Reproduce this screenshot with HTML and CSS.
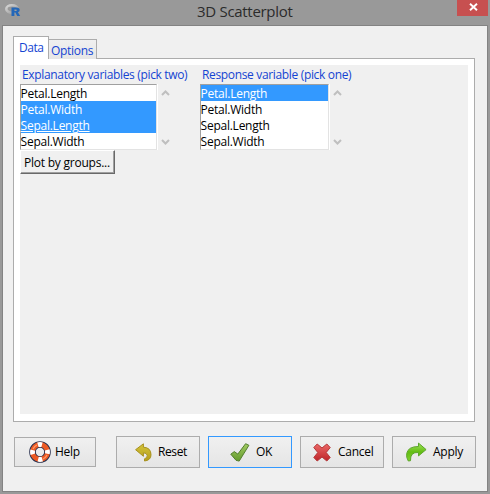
FILE: index.html
```
<!DOCTYPE html>
<html lang="en">
<head>
<meta charset="utf-8">
<title>3D Scatterplot</title>
<link rel="stylesheet" href="styles.css">
</head>
<body>
<div class="window">
  <header class="titlebar">
    <svg class="logo" width="17" height="13" viewBox="0 0 17 13">
      <defs><linearGradient id="ring" x2="1" y2="1"><stop offset="0" stop-color="#d6d6d6"/><stop offset="1" stop-color="#999"/></linearGradient></defs>
      <ellipse cx="7" cy="5" rx="5.700" ry="3.700" fill="none" stroke="url(#ring)" stroke-width="2.600"/>
      <path d="M6.500 3.500h5q3.200 0 3.200 2.500 0 1.700-1.800 2.300l2.300 3.700h-3l-1.800-3.400h-1v3.400h-2.900zM9.400 5.400v1.500h1.500q.9 0 .9-.75t-.9-.75z" fill="#2467b8" fill-rule="evenodd"/>
    </svg>
    <h1 class="title">3D Scatterplot</h1>
    <div class="close"><svg width="9" height="8" viewBox="0 0 9 8"><path d="M1 .7l7 6.600M8 .7L1 7.300" stroke="#fff" stroke-width="1.900"/></svg></div>
  </header>
  <main class="client">
    <nav class="tabs">
      <div class="tab active">Data</div>
      <div class="tab">Options</div>
    </nav>
    <section class="pane">
      <div class="sheet">
        <div class="pickers">
          <div class="picker explanatory">
            <div class="label">Explanatory variables (pick two)</div>
            <div class="row">
              <ul class="list">
                <li>Petal.Length</li>
                <li class="selected">Petal.Width</li>
                <li class="selected current">Sepal.Length</li>
                <li>Sepal.Width</li>
              </ul>
              <div class="scroll">
                <svg width="9" height="6" viewBox="0 0 9 6"><path d="M1 5l3.500-3.500L8 5"/></svg>
                <svg width="9" height="6" viewBox="0 0 9 6"><path d="M1 1l3.500 3.500L8 1"/></svg>
              </div>
            </div>
          </div>
          <div class="picker response">
            <div class="label">Response variable (pick one)</div>
            <div class="row">
              <ul class="list">
                <li class="selected">Petal.Length</li>
                <li>Petal.Width</li>
                <li>Sepal.Length</li>
                <li>Sepal.Width</li>
              </ul>
              <div class="scroll">
                <svg width="9" height="6" viewBox="0 0 9 6"><path d="M1 5l3.500-3.500L8 5"/></svg>
                <svg width="9" height="6" viewBox="0 0 9 6"><path d="M1 1l3.500 3.500L8 1"/></svg>
              </div>
            </div>
          </div>
        </div>
        <button class="groups">Plot by groups...</button>
      </div>
    </section>
    <footer class="actions">
      <button class="action help">
        <svg width="22" height="22" viewBox="0 0 22 22">
          <circle cx="11" cy="11" r="7.500" fill="none" stroke="#28304e" stroke-width="6.600"/>
          <circle cx="11" cy="11" r="7.500" fill="none" stroke="#ec5a24" stroke-width="4.800"/>
          <circle cx="11" cy="11" r="7.500" fill="none" stroke="#fff" stroke-width="4.800" stroke-dasharray="4.200 7.580" stroke-dashoffset="-9.400"/>
          <path d="M4 8q1.500-3 4-4M14 18q3-1.500 4-4" fill="none" stroke="#ff9a68" stroke-width="1.200"/>
        </svg><span>Help</span>
      </button>
      <button class="action reset">
        <svg width="17" height="19" viewBox="0 0 17 19">
          <defs><linearGradient id="gold" x2="0" y2="1"><stop offset="0" stop-color="#d3c43b"/><stop offset="1" stop-color="#b69d19"/></linearGradient></defs>
          <path d="M.6 6.700L8.400.8v3.400q7.600.4 7.600 7.500 0 5.600-6.500 6.300v-2.200q3.200-.8 2.700-3.500-.4-2.400-3.800-2.500v3.500z" fill="url(#gold)" stroke="#a79120"/>
        </svg><span>Reset</span>
      </button>
      <button class="action ok">
        <svg width="20" height="19" viewBox="0 0 20 19">
          <defs><linearGradient id="green" x2="0" y2="1"><stop offset="0" stop-color="#a2cb62"/><stop offset="1" stop-color="#649b2d"/></linearGradient></defs>
          <path d="M.8 11.200l3.500-2.600 3.500 2.500L15.600.7l3.300 1.600L9.200 18.100 6 17.300z" fill="url(#green)" stroke="#537e2e" stroke-linejoin="round"/>
        </svg><span>OK</span>
      </button>
      <button class="action cancel">
        <svg width="18" height="19" viewBox="0 0 18 19">
          <defs><linearGradient id="red" x2="0" y2="1"><stop offset="0" stop-color="#ec6867"/><stop offset="1" stop-color="#bd2529"/></linearGradient></defs>
          <path d="M4.200 1L9 5 13.800 1 17.200 4.500 13.200 9.500l4 5-3.400 3.500L9 14 4.200 18 .8 14.500l4-5-4-5z" fill="url(#red)" stroke="#b33638" stroke-linejoin="round"/>
        </svg><span>Cancel</span>
      </button>
      <button class="action apply">
        <svg width="21" height="20" viewBox="0 0 21 20">
          <defs><linearGradient id="lime" x2="0" y2="1"><stop offset="0" stop-color="#a3e45b"/><stop offset=".5" stop-color="#62bd13"/><stop offset="1" stop-color="#82d22d"/></linearGradient></defs>
          <path d="M12.500 1.100l7.600 6.500-7.600 6.300v-3.400Q4 9.800 4.500 18.700L2.300 19Q0 15.500.7 11.500 2 4.500 12.500 4.500z" fill="url(#lime)" stroke="#5ca52b" stroke-linejoin="round"/>
        </svg><span>Apply</span>
      </button>
    </footer>
  </main>
</div>
</body>
</html>
```
FILE: styles.css
```
* { box-sizing: border-box; }
body {
  margin: 0;
  font: 12px/16px "Open Sans", "Noto Sans", sans-serif;
  color: #000;
}
.window {
  width: 490px;
  height: 494px;
  padding: 0 2px 2px;
  background: #999;
  overflow: hidden;
}
.titlebar {
  height: 25px;
  display: flex;
  align-items: flex-start;
}
.logo { width: 17px; margin: 4px 0 0 3px; }
.title {
  flex: 1;
  margin: 0 0 0 175px;
  font-size: 15px;
  font-weight: 400;
  line-height: 22px;
  color: #2b2b2b;
  letter-spacing: -.3px;
  white-space: nowrap;
}
.close {
  width: 31px;
  height: 16px;
  background: #c75050;
  display: flex;
  justify-content: center;
  padding: 3px 0 0 1px;
}
.client {
  width: 486px;
  height: 467px;
  padding: 10px 10px 0;
  border: 1px solid #838383;
  background: #f0f0f0;
}
.tabs {
  display: flex;
  align-items: flex-end;
  height: 23px;
  position: relative;
}
.tab {
  width: 49px;
  height: 20px;
  margin-left: -1px;
  padding: 3px 0 0 2px;
  border: 1px solid #acacac;
  border-bottom: 0;
  background: linear-gradient(#f0f0f0, #e6e6e6);
  color: #1444d2;
  letter-spacing: -.3px;
  white-space: nowrap;
}
.tab.active {
  width: 36px;
  height: 23px;
  margin-left: 0;
  padding: 3px 0 0 5px;
  background: #fff;
  letter-spacing: -.5px;
}
.pane {
  width: 462px;
  height: 364px;
  margin-top: -1px;
  padding: 6px;
  border: 1px solid #acacac;
  background: #fff;
}
.sheet { width: 448px; height: 349px; background: #f0f0f0; }
.pickers { display: flex; }
.picker { width: 180px; }
.label {
  height: 19px;
  padding: 2px 0 0 2px;
  color: #1444d2;
  letter-spacing: -.34px;
  white-space: nowrap;
}
.row { display: flex; }
.list {
  width: 137px;
  height: 66px;
  margin: 0;
  padding: 0;
  list-style: none;
  background: #fff;
  border: 1px solid;
  border-color: #a0a0a0 #e3e3e3 #e3e3e3 #a0a0a0;
}
.response .list { width: 129px; }
.list li {
  height: 16px;
  line-height: 18px;
  letter-spacing: -.25px;
  text-indent: -.4px;
  white-space: nowrap;
}
.list .selected { background: #3399ff; color: #fff; }
.current { text-decoration: underline; }
.scroll {
  width: 17px;
  height: 66px;
  padding: 6px 0 5px 3px;
  border-left: 1px solid #fff;
  display: flex;
  flex-direction: column;
  justify-content: space-between;
}
.scroll path { fill: none; stroke: #bfbfbf; stroke-width: 2; }
.groups {
  display: block;
  width: 95px;
  height: 24px;
  padding: 1px 0 0 3px;
  border: 1px solid;
  border-color: #fff #696969 #696969 #fff;
  box-shadow: inset -1px -1px #a0a0a0;
  background: #f0f0f0;
  font: inherit;
  letter-spacing: -.23px;
  text-align: left;
  white-space: nowrap;
}
.actions {
  display: flex;
  align-items: center;
  gap: 8px;
  width: 463px;
  height: 32px;
  margin-top: 14px;
}
.action {
  width: 84px;
  height: 32px;
  padding: 0;
  display: flex;
  align-items: center;
  border: 1px solid #acacac;
  background: linear-gradient(#f0f0f0, #e5e5e5);
  color: #000;
  font: inherit;
  letter-spacing: -.25px;
  white-space: nowrap;
}
.action svg { flex: none; }
.help { width: 82px; height: 30px; margin: 0 12px 0 1px; padding-left: 14px; }
.help svg { margin-right: 4px; }
.reset { padding-left: 18px; letter-spacing: -.4px; }
.reset svg { margin-right: 6px; }
.ok { border-color: #3399ff; padding-left: 21px; }
.ok svg { margin-right: 6px; }
.cancel { padding-left: 12px; }
.cancel svg { margin-right: 7px; }
.apply { padding-left: 13px; }
.apply svg { margin-right: 6px; }
```
